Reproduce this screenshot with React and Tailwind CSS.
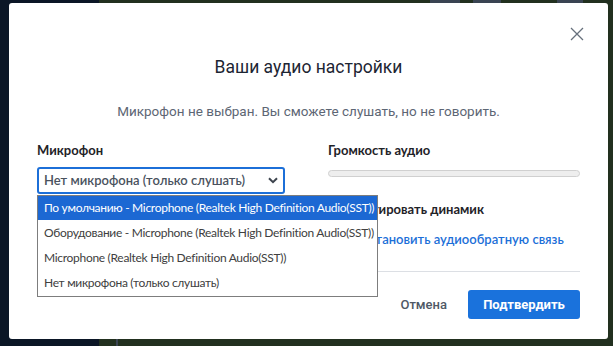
import React from "react";

const sans = { fontFamily: "Lato, 'Liberation Sans', sans-serif" };
const rob = { fontFamily: "Roboto, 'Liberation Sans', sans-serif" };

const options = [
  "По умолчанию - Microphone (Realtek High Definition Audio(SST))",
  "Оборудование - Microphone (Realtek High Definition Audio(SST))",
  "Microphone (Realtek High Definition Audio(SST))",
  "Нет микрофона (только слушать)",
];

export default function App() {
  return (
    <div className="relative w-[613px] h-[346px] overflow-hidden bg-[#22301f] pl-[9px] pt-[3px]">
      {/* backdrop picture behind the dialog */}
      <div className="absolute left-0 top-0 bottom-0 w-[99px] bg-[#0b1626]" />
      <div className="absolute top-0 left-[430px] w-[30px] h-[4px] bg-[#3a4452]" />
      <div className="absolute top-0 left-[473px] w-[28px] h-[4px] bg-[#3a4452]" />
      <div className="absolute top-0 left-[557px] w-[26px] h-[4px] bg-[#3a4452]" />
      <div className="absolute bottom-0 left-[116px] w-[2px] h-[7px] bg-[#3a4452]" />

      {/* dialog */}
      <div className="relative w-[599px] h-[336px] bg-white rounded-[3px] px-[28px] pt-[24px] flex flex-col">
        <div className="flex justify-end -mr-[4px]">
          <button className="w-[14px] h-[14px] text-[#66707c]">
            <svg width="14" height="14" viewBox="0 0 14 14" fill="none" stroke="currentColor" strokeWidth="1.3">
              <path d="M1 1L13 13M13 1L1 13" />
            </svg>
          </button>
        </div>

        <h1 className="mt-[14px] text-center text-[17.5px] leading-[24px] text-[#1d2533]" style={rob}>
          Ваши аудио настройки
        </h1>
        <p className="mt-[22px] text-center text-[13.5px] leading-[20px] text-[#5d6674]" style={rob}>
          Микрофон не выбран. Вы сможете слушать, но не говорить.
        </p>

        <div className="mt-[20px] grid grid-cols-[248px_1fr] gap-x-[43px]" style={sans}>
          <div className="relative">
            <div className="text-[13px] leading-[18px] font-bold text-[#1f2328]">Микрофон</div>
            <div className="mt-[8px] h-[27px] border-2 border-[#1c6fd8] rounded-[3px] flex items-center justify-between pl-[5px] pr-[5px]">
              <span className="text-[13px] font-semibold text-[#4a525e]">Нет микрофона (только слушать)</span>
              <svg width="10" height="7" viewBox="0 0 10 7" fill="none" stroke="#3d444e" strokeWidth="2">
                <path d="M1 1.2L5 5.2L9 1.2" />
              </svg>
            </div>
            {/* open list of the select */}
            <div className="absolute left-0 top-[54px] w-[341px] bg-white border border-[#7d7d7d] z-10 pb-[1px] overflow-hidden flex flex-col gap-px">
              {options.map((o, i) => (
                <div
                  key={o}
                  className={
                    "h-[24px] pl-[6px] flex items-center text-[12px] tracking-[-0.3px] whitespace-nowrap " +
                    (i === 0 ? "bg-[#1c68d3] text-white" : "text-[#404040]")
                  }
                >
                  {o}
                </div>
              ))}
            </div>
          </div>

          <div className="flex flex-col">
            <div className="text-[13px] leading-[18px] font-bold text-[#1f2328]">Громкость аудио</div>
            <div className="mt-[11px] h-[7px] rounded-full bg-[#eeeeee] border border-[#d0d0d0]" />
            <div className="mt-[23px] text-[13px] leading-[18px] font-bold text-[#1f2328]">
              Протестировать динамик
            </div>
            <div className="mt-[11px] ml-[31px] text-[13px] leading-[20px] font-semibold text-[#1c6fd8]">
              Остановить аудиообратную связь
            </div>
          </div>
        </div>

        <div className="mt-[22px] h-px bg-[#dcdfe4]" />

        <div className="mt-[18px] flex justify-end items-center gap-[21px]" style={rob}>
          <button className="text-[13px] font-medium text-[#4f5865]">Отмена</button>
          <button className="w-[112px] h-[29px] rounded-[3px] bg-[#1a72dc] text-white text-[13px] font-bold">
            Подтвердить
          </button>
        </div>
      </div>
    </div>
  );
}
